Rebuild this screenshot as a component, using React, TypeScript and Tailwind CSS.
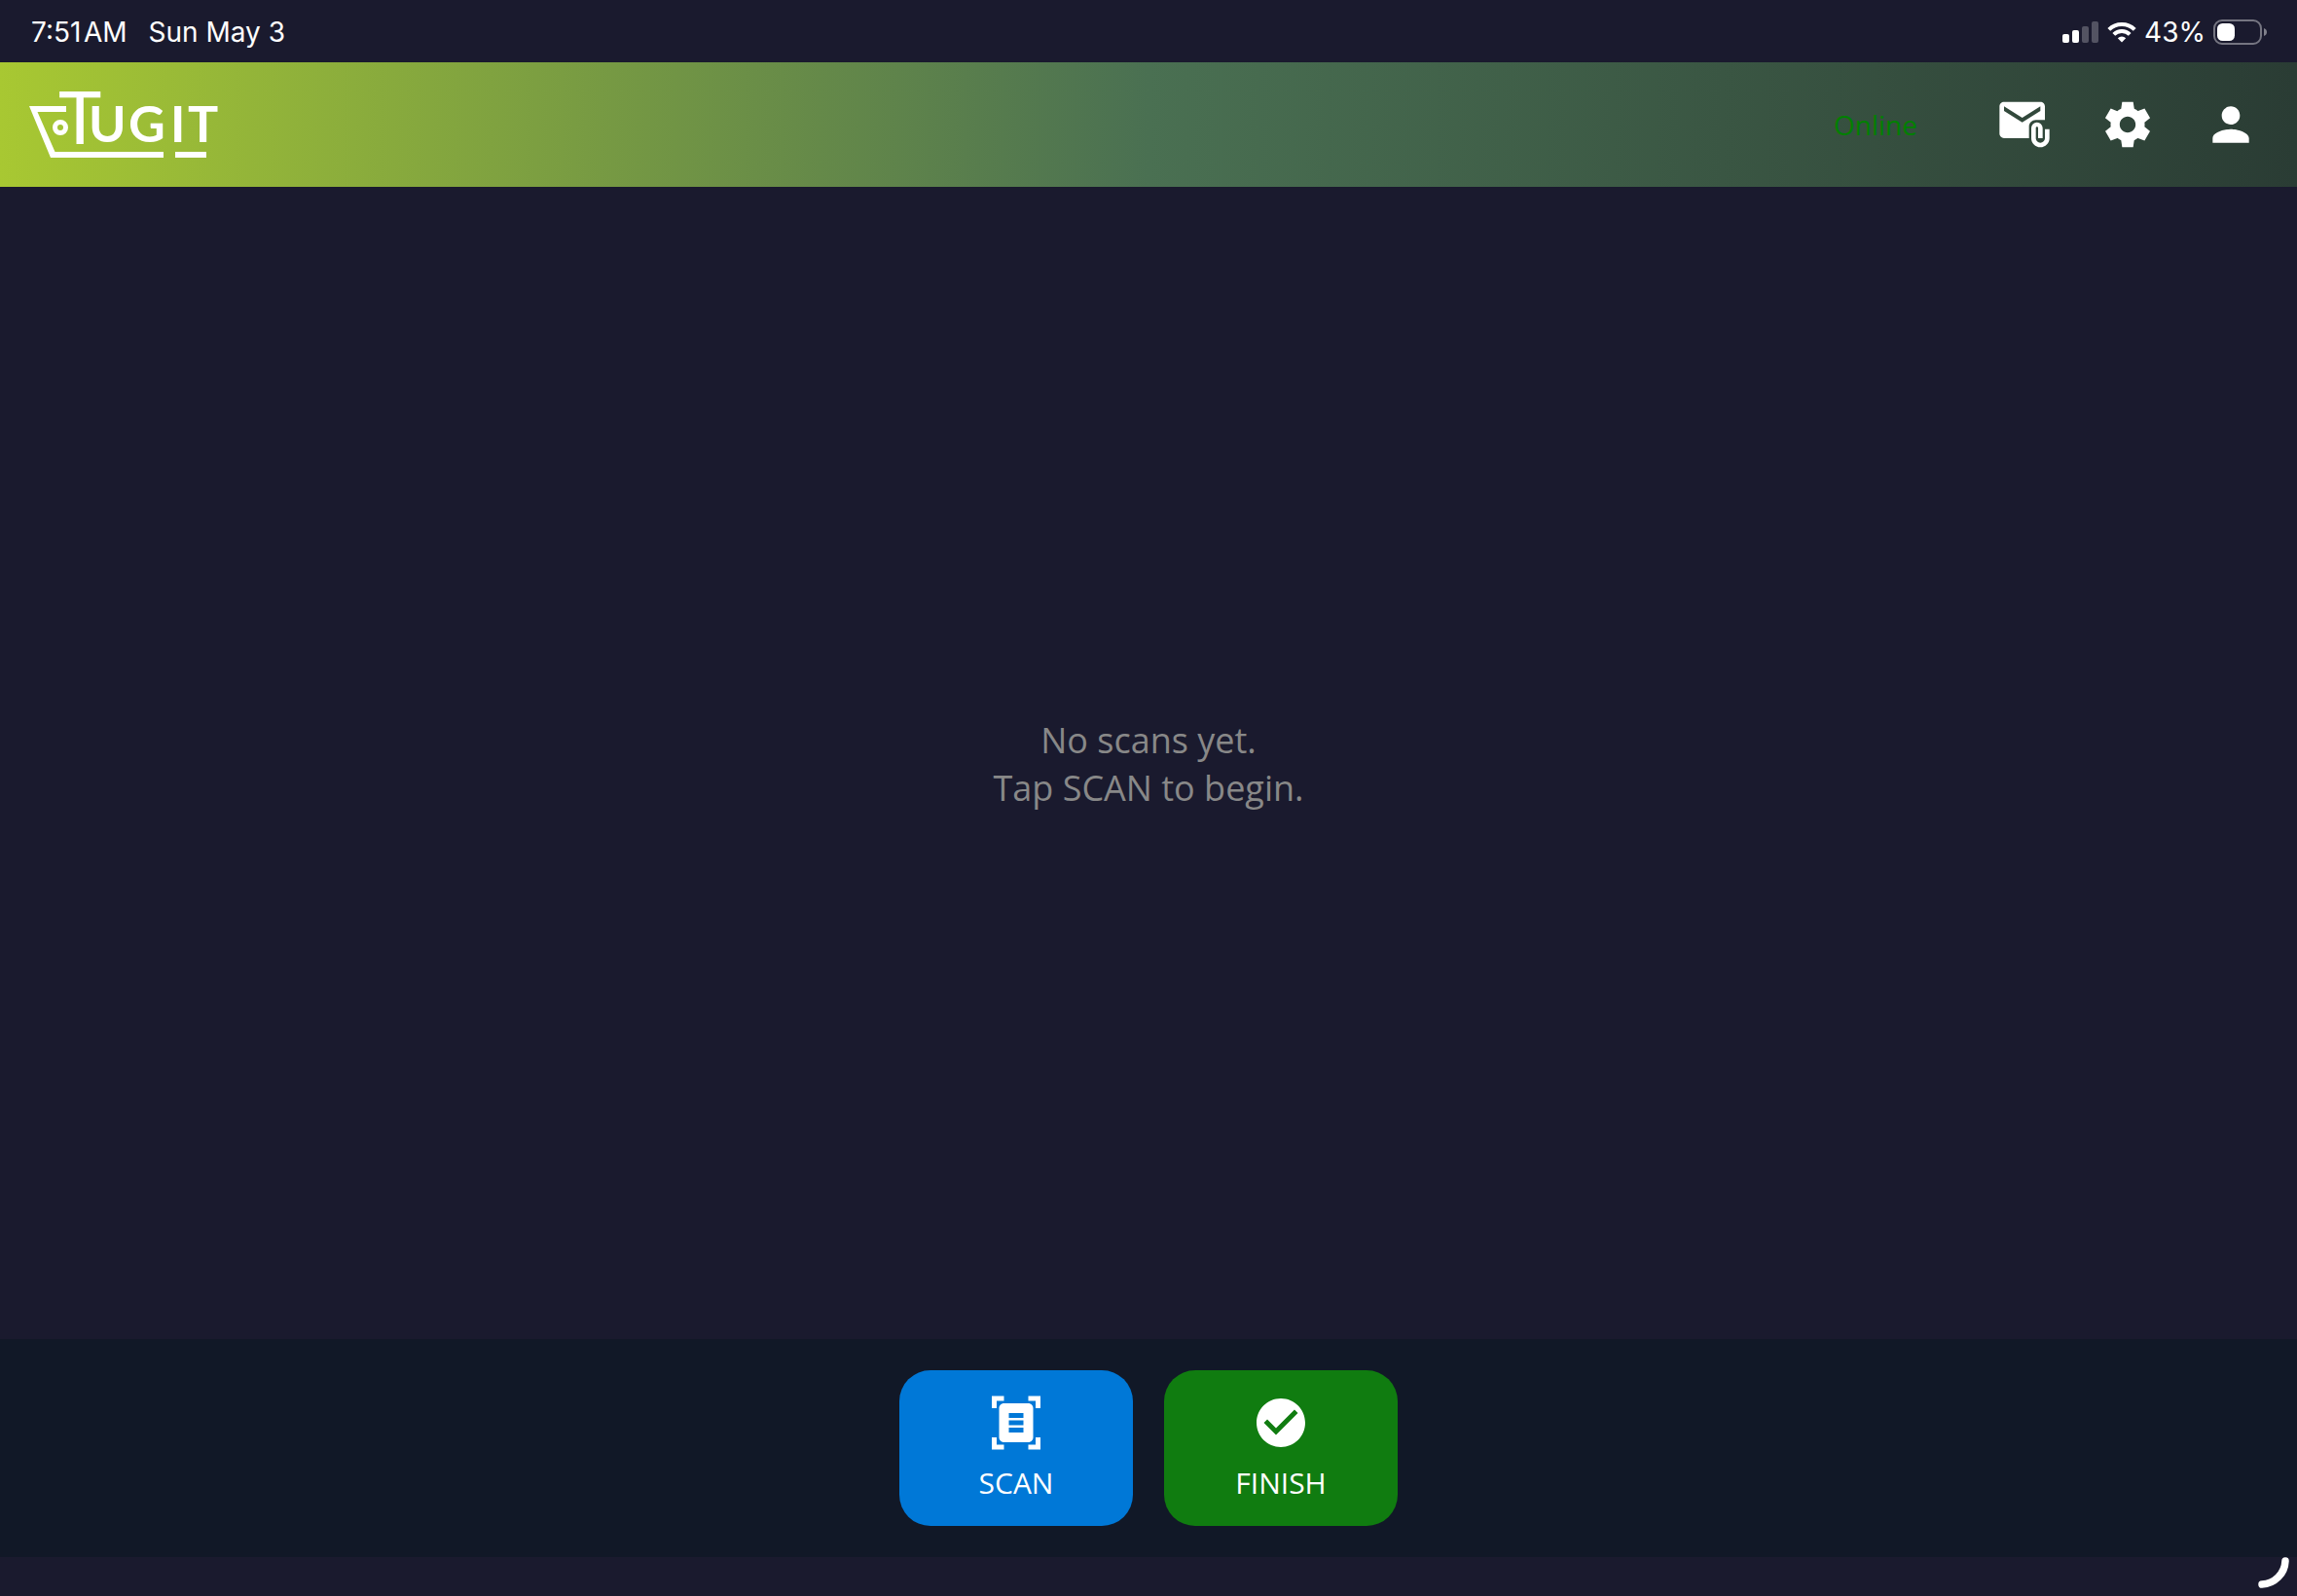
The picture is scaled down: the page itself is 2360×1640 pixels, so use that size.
import { MdAttachEmail, MdCheckCircle, MdDocumentScanner, MdPerson } from "react-icons/md";

const navActions = [
  { label: "Messages", icon: MdAttachEmail },
  { label: "Settings", icon: GearIcon },
  { label: "Account", icon: MdPerson },
];

const scanActions = [
  { label: "SCAN", icon: MdDocumentScanner, color: "bg-[#0078d7]" },
  { label: "FINISH", icon: MdCheckCircle, color: "bg-[#107c10]" },
];

function GearIcon({ className }: { className?: string }) {
  return (
    <svg className={className} viewBox="0 0 24 24" fill="currentColor" aria-hidden="true">
      <path d="M19.44 12.99l-.01.02c.04-.33.08-.67.08-1.01 0-.34-.03-.66-.07-.99l.01.02 2.44-1.92-2.43-4.22-2.87 1.16.01.01c-.52-.4-1.09-.74-1.71-1h.01L14.44 2H9.57l-.44 3.07h.01c-.62.26-1.19.6-1.71 1l.01-.01-2.88-1.17-2.44 4.22 2.44 1.92.01-.02c-.04.33-.07.65-.07.99 0 .34.03.68.08 1.01l-.01-.02-2.1 1.65-.33.26 2.43 4.2 2.88-1.15-.02-.04c.53.41 1.1.75 1.73 1.01h-.03L9.58 22h4.85s.03-.18.06-.42l.38-2.65h-.01c.62-.26 1.2-.6 1.73-1.01l-.02.04 2.88 1.15 2.43-4.2s-.14-.12-.33-.26l-2.11-1.66zM12 15.5c-1.93 0-3.5-1.57-3.5-3.5s1.57-3.5 3.5-3.5 3.5 1.57 3.5 3.5-1.57 3.5-3.5 3.5z" />
    </svg>
  );
}

function CellularIcon() {
  return (
    <svg className="h-6 w-[38px]" viewBox="0 0 38 24" fill="#fff" aria-hidden="true">
      <rect x="0" y="14" width="7" height="9" rx="2" />
      <rect x="10" y="10" width="7" height="13" rx="2" />
      <rect x="20" y="6" width="7" height="17" rx="2" opacity=".25" />
      <rect x="30" y="1" width="7" height="22" rx="2" opacity=".25" />
    </svg>
  );
}

function WifiIcon() {
  return (
    <svg className="h-6 w-[30px]" viewBox="0 0 30 24" fill="none" stroke="#fff" strokeWidth="4" aria-hidden="true">
      <path d="M1.8 9.3a18.8 18.8 0 0 1 26.4 0" />
      <path d="M6.8 14.4a11.7 11.7 0 0 1 16.4 0" />
      <path d="M15 22.4l-4.2-4.2a6 6 0 0 1 8.4 0z" fill="#fff" stroke="none" />
    </svg>
  );
}

function BatteryIcon() {
  return (
    <svg className="h-[26px] w-14" viewBox="0 0 56 26" aria-hidden="true">
      <rect x="1" y="1" width="48" height="24" rx="8" fill="none" stroke="#fff" strokeOpacity=".4" strokeWidth="2" />
      <rect x="4" y="4" width="18" height="18" rx="5.5" fill="#fff" />
      <path d="M52 9c2 .7 3 2.2 3 4s-1 3.3-3 4z" fill="#fff" opacity=".45" />
    </svg>
  );
}

function StatusBar() {
  return (
    <div className="flex h-16 items-center justify-between pl-8 pr-[30px] pt-0.5 font-[Inter,sans-serif] text-[28px] leading-8 text-white">
      <div className="flex gap-[22px]">
        <span>7:51{"\u200A"}AM</span>
        <span>Sun May 3</span>
      </div>
      <div className="flex items-center gap-2">
        <CellularIcon />
        <WifiIcon />
        <span>43%</span>
        <BatteryIcon />
      </div>
    </div>
  );
}

function Logo() {
  return (
    <svg className="h-[110px] w-[200px]" viewBox="0 -19 200 110" fill="#fff" role="img" aria-label="Tug It">
      <path d="M0 17h38v6H8.5L26.5 64H138v6H22z" />
      <path d="M150 64h32v6h-32z" />
      <circle cx="32" cy="39" r="5.5" fill="none" stroke="#fff" strokeWidth="5" />
      <text x="30" y="56" fontFamily="Lato, sans-serif" fontSize="75" fontWeight="400">T</text>
      <text x="61 102 145 163" y="54" fontFamily="Lato, sans-serif" fontSize="52" fontWeight="700">UGIT</text>
    </svg>
  );
}

function Header() {
  return (
    <header className="flex h-32 items-center justify-between bg-linear-to-r/srgb from-[#a8c832] via-[#4a7052] to-[#2a3c34] pl-[30px] pr-10">
      <Logo />
      <div className="flex items-center gap-[50px] text-white">
        <span className="mr-8 text-[28px] text-[#008000]">Online</span>
        {navActions.map(({ label, icon: Icon }) => (
          <button key={label} type="button" aria-label={label}>
            <Icon className="size-14" />
          </button>
        ))}
      </div>
    </header>
  );
}

export default function App() {
  return (
    <div className="flex min-h-screen flex-col bg-[#1a1a2e] font-['Open_Sans',sans-serif]">
      <StatusBar />
      <Header />
      <main className="flex flex-1 items-center justify-center pt-0.5">
        <p className="text-center text-[36px] leading-[49px] text-[#888888]">
          No scans yet.
          <br />
          Tap SCAN to begin.
        </p>
      </main>
      <footer>
        <div className="flex justify-center gap-8 bg-[#111827] py-8">
          {scanActions.map(({ label, icon: Icon, color }) => (
            <button
              key={label}
              type="button"
              className={`flex h-40 w-60 flex-col items-center gap-3 rounded-[32px] pt-6 text-[30px] leading-10 text-white ${color}`}
            >
              <Icon className="size-[60px]" />
              {label}
            </button>
          ))}
        </div>
        <div className="flex h-10 justify-end pr-2">
          <svg className="size-8" viewBox="0 0 32 32" fill="none" stroke="#fff" strokeWidth="7.5" strokeLinecap="round" aria-hidden="true">
            <path d="M28 4A25 25 0 0 1 4 28" />
          </svg>
        </div>
      </footer>
    </div>
  );
}
